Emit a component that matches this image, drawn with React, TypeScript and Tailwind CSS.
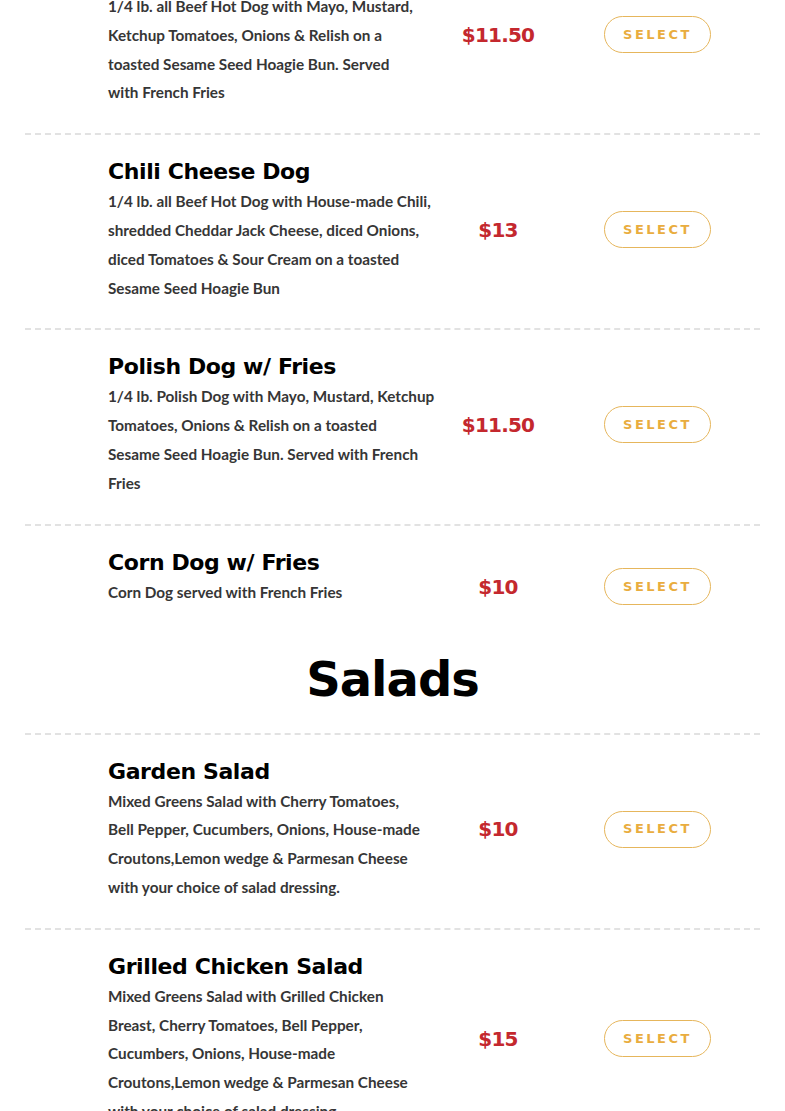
import React from "react";

type Item = { name: string; lines: string[]; price: string };

const hotDogs: Item[] = [
  {
    name: "Hot Dog w/ Fries",
    lines: [
      "1/4 lb. all Beef Hot Dog with Mayo, Mustard,",
      "Ketchup Tomatoes, Onions & Relish on a",
      "toasted Sesame Seed Hoagie Bun. Served",
      "with French Fries",
    ],
    price: "$11.50",
  },
  {
    name: "Chili Cheese Dog",
    lines: [
      "1/4 lb. all Beef Hot Dog with House-made Chili,",
      "shredded Cheddar Jack Cheese, diced Onions,",
      "diced Tomatoes & Sour Cream on a toasted",
      "Sesame Seed Hoagie Bun",
    ],
    price: "$13",
  },
  {
    name: "Polish Dog w/ Fries",
    lines: [
      "1/4 lb. Polish Dog with Mayo, Mustard, Ketchup",
      "Tomatoes, Onions & Relish on a toasted",
      "Sesame Seed Hoagie Bun. Served with French",
      "Fries",
    ],
    price: "$11.50",
  },
  {
    name: "Corn Dog w/ Fries",
    lines: ["Corn Dog served with French Fries"],
    price: "$10",
  },
];

const salads: Item[] = [
  {
    name: "Garden Salad",
    lines: [
      "Mixed Greens Salad with Cherry Tomatoes,",
      "Bell Pepper, Cucumbers, Onions, House-made",
      "Croutons,Lemon wedge & Parmesan Cheese",
      "with your choice of salad dressing.",
    ],
    price: "$10",
  },
  {
    name: "Grilled Chicken Salad",
    lines: [
      "Mixed Greens Salad with Grilled Chicken",
      "Breast, Cherry Tomatoes, Bell Pepper,",
      "Cucumbers, Onions, House-made",
      "Croutons,Lemon wedge & Parmesan Cheese",
      "with your choice of salad dressing.",
    ],
    price: "$15",
  },
];

const heading = { fontFamily: '"DejaVu Sans", sans-serif' };
const body = { fontFamily: 'Lato, "Open Sans", sans-serif' };

function MenuRow({ item }: { item: Item }) {
  return (
    <div className="box-content flex min-h-[78px] items-center border-t-2 border-dashed border-[#e2e2e2] pl-[83px] pt-[22px] pb-[26px]">
      <div className="w-[328px] self-start">
        <h3 className="text-[22px] leading-[30px] font-bold text-black tracking-[-0.4px]" style={heading}>
          {item.name}
        </h3>
        <p className="text-[15.3px] leading-[28.8px] font-bold text-[#363636]" style={body}>
          {item.lines.map((line, i) => (
            <span key={i} className="block whitespace-nowrap">
              {line}
            </span>
          ))}
        </p>
      </div>
      <div className="w-[124px] text-center">
        <span className="text-[20px] font-bold text-[#c4282e] tracking-[-0.8px]" style={heading}>
          {item.price}
        </span>
      </div>
      <button
        className="ml-[44px] h-[37px] w-[107px] rounded-full border border-[#e6b65c] bg-white text-[13px] font-bold tracking-[2.5px] text-[#e9ad3f]"
        style={heading}
      >
        SELECT
      </button>
    </div>
  );
}

export default function App() {
  return (
    <div className="h-[1111px] overflow-hidden bg-white">
      <div className="mx-[25px] -mt-[62px]">
        {hotDogs.map((item) => (
          <MenuRow key={item.name} item={item} />
        ))}

        <h2
          className="text-center text-[48px] leading-[54px] font-bold text-black tracking-[-1px] mb-[27px]"
          style={heading}
        >
          Salads
        </h2>

        {salads.map((item) => (
          <MenuRow key={item.name} item={item} />
        ))}
      </div>
    </div>
  );
}
